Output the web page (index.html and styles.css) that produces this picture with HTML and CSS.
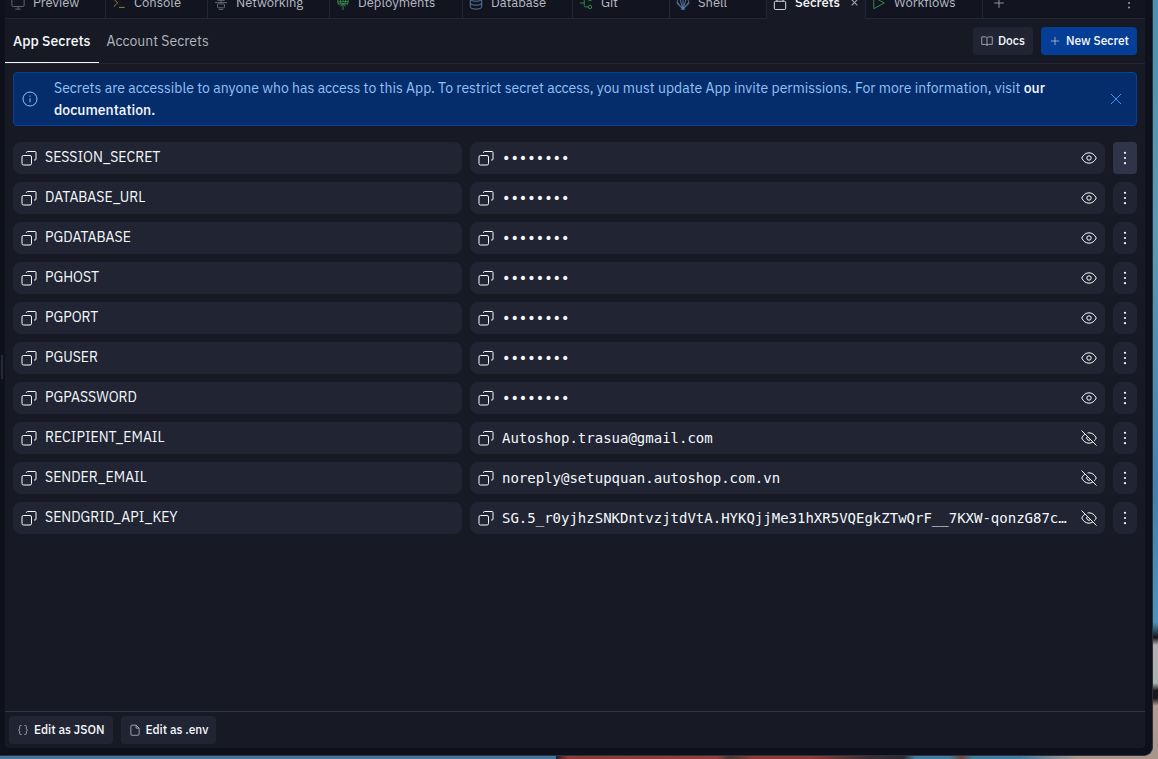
FILE: index.html
```
<!DOCTYPE html>
<html lang="en">
<head>
<meta charset="utf-8">
<title>Secrets</title>
<link rel="stylesheet" href="styles.css">
</head>
<body>
<svg class="sprite" aria-hidden="true">
  <symbol id="copy" viewBox="0 0 16 16"><rect x="1" y="5.500" width="9.500" height="9.500" rx="1.500"/><path d="M5.500 3V2.500a1 1 0 0 1 1-1H14a1 1 0 0 1 1 1V9a1 1 0 0 1-1 1h-1"/></symbol>
  <symbol id="eye" viewBox="0 0 16 16"><path d="M.7 8C2.500 4.500 5 2.800 8 2.800S13.500 4.500 15.300 8C13.500 11.500 11 13.200 8 13.200S2.500 11.500.7 8z"/><circle cx="8" cy="8" r="2.200"/></symbol>
  <symbol id="eye-off" viewBox="0 0 16 16"><path d="M.5.5l15 15M6.500 3A7 7 0 0 1 8 2.800c3 0 5.500 1.700 7.300 5.200a12 12 0 0 1-2 2.800M3.800 4.200A10 10 0 0 0 .7 8c1.800 3.500 4.300 5.200 7.300 5.200a7.500 7.500 0 0 0 3.800-1.200M6.400 6.400a2.200 2.200 0 0 0 3.200 3.200"/></symbol>
  <symbol id="dots" viewBox="0 0 16 16"><g fill="currentColor" stroke="none"><circle cx="8" cy="2.800" r="1.100"/><circle cx="8" cy="8" r="1.100"/><circle cx="8" cy="13.200" r="1.100"/></g></symbol>
  <symbol id="plus" viewBox="0 0 16 16"><path d="M8 2.500v11M2.500 8h11"/></symbol>
  <symbol id="close" viewBox="0 0 16 16"><path d="M3 3l10 10M13 3L3 13"/></symbol>
</svg>
<div class="window">
  <main class="panel">
    <nav class="tabs" aria-label="Tools">
      <button class="tab"><svg class="icon gray" viewBox="0 0 16 16"><rect x="1" y="1" width="14" height="11" rx="1.500"/><path d="M8 12v3M5 15h6"/></svg>Preview</button>
      <button class="tab"><svg class="icon gold" viewBox="0 0 16 16"><path d="M2 3.500l4.500 4.300L2 12.200M8 13h6.500"/></svg>Console</button>
      <button class="tab"><svg class="icon gray" viewBox="0 0 16 16"><rect x="3.500" y="1" width="9" height="4" rx="1"/><path d="M1 7.500h14M8 5v3"/><rect x="4" y="9" width="8" height="4.500" rx="1"/><path d="M5.500 15.500h5"/></svg>Networking</button>
      <button class="tab"><svg class="icon green" viewBox="0 0 16 16"><path d="M3.500 10A6 6 0 1 1 12.500 10M2 6.500h12M8 .5v6M5.500 1.500c-1 3-.5 5 .5 8M10.500 1.500c1 3 .5 5-.5 8M2.500 9h11M8 16V8.500M5 12l3-3.500 3 3.500"/></svg>Deployments</button>
      <button class="tab"><svg class="icon blue" viewBox="0 0 16 16"><ellipse cx="8" cy="3.500" rx="6.500" ry="2.500"/><path d="M1.500 3.500v9c0 1.500 3 2.500 6.500 2.500s6.500-1 6.500-2.500v-9M1.500 8c0 1.500 3 2.500 6.500 2.500s6.500-1 6.500-2.500"/></svg>Database</button>
      <button class="tab"><svg class="icon green" viewBox="0 0 16 16"><path d="M1 8h5M10.500 3.500H7.500a1.500 1.500 0 0 0-1.500 1.500v6a1.500 1.500 0 0 0 1.500 1.500h3"/><circle cx="12.500" cy="3.500" r="2"/><circle cx="12.500" cy="12.500" r="2"/></svg>Git</button>
      <button class="tab"><svg class="icon blue" viewBox="0 0 16 16"><path d="M8 15L1.500 9C.5 5 4 1.500 8 1.500S15.500 5 14.500 9zM8 15L4.500 3.500M8 15V2M8 15l3.500-11.500M8 15L1.500 7M8 15l6.500-8M5.500 15h5"/></svg>Shell</button>
      <button class="tab active" aria-current="page"><svg class="icon" viewBox="0 0 16 16"><rect x="1.500" y="6" width="13" height="9.500" rx="1.500"/><path d="M4.500 6V4a3.500 3.500 0 0 1 7 0v2"/></svg>Secrets<svg class="icon tiny"><use href="#close"/></svg></button>
      <button class="tab"><svg class="icon green" viewBox="0 0 16 16"><path d="M2 1.500v13L14 8z"/></svg>Workflows</button>
      <span class="tabs-end">
        <button class="bare" aria-label="New tab"><svg class="icon"><use href="#plus"/></svg></button>
        <button class="bare" aria-label="Pane menu"><svg class="icon"><use href="#dots"/></svg></button>
      </span>
    </nav>
    <header class="toolbar">
      <a class="view current" href="#app">App Secrets</a>
      <a class="view" href="#account">Account Secrets</a>
      <div class="actions">
        <button class="btn"><svg class="icon small" viewBox="0 0 16 16"><path d="M8 4.200C7.600 3 7 2.500 5.500 2.500H1v10h5c1.200 0 2 .5 2 1.500 0-1 .8-1.500 2-1.500h5v-10h-4.500C9 2.500 8.400 3 8 4.200zV14"/></svg>Docs</button>
        <button class="btn primary"><svg class="icon small"><use href="#plus"/></svg>New Secret</button>
      </div>
    </header>
    <section class="content">
      <div class="banner">
        <svg class="icon info" viewBox="0 0 16 16"><circle cx="8" cy="8" r="7"/><path d="M8 7.300v4M8 4.500v1.200"/></svg>
        <p>Secrets are accessible to anyone who has access to this App. To restrict secret access, you must update App invite permissions. For more information, visit <a href="#docs">our documentation.</a></p>
        <button class="bare dismiss" aria-label="Dismiss"><svg class="icon"><use href="#close"/></svg></button>
      </div>
      <ul class="secrets">
        <li class="row"><div class="field"><button class="bare" aria-label="Copy name"><svg class="icon"><use href="#copy"/></svg></button><span class="name">SESSION_SECRET</span></div><div class="field"><button class="bare" aria-label="Copy value"><svg class="icon"><use href="#copy"/></svg></button><span class="value">••••••••</span><button class="bare" aria-label="Show value"><svg class="icon"><use href="#eye"/></svg></button></div><button class="more hover" aria-label="More"><svg class="icon"><use href="#dots"/></svg></button></li>
        <li class="row"><div class="field"><button class="bare" aria-label="Copy name"><svg class="icon"><use href="#copy"/></svg></button><span class="name">DATABASE_URL</span></div><div class="field"><button class="bare" aria-label="Copy value"><svg class="icon"><use href="#copy"/></svg></button><span class="value">••••••••</span><button class="bare" aria-label="Show value"><svg class="icon"><use href="#eye"/></svg></button></div><button class="more" aria-label="More"><svg class="icon"><use href="#dots"/></svg></button></li>
        <li class="row"><div class="field"><button class="bare" aria-label="Copy name"><svg class="icon"><use href="#copy"/></svg></button><span class="name">PGDATABASE</span></div><div class="field"><button class="bare" aria-label="Copy value"><svg class="icon"><use href="#copy"/></svg></button><span class="value">••••••••</span><button class="bare" aria-label="Show value"><svg class="icon"><use href="#eye"/></svg></button></div><button class="more" aria-label="More"><svg class="icon"><use href="#dots"/></svg></button></li>
        <li class="row"><div class="field"><button class="bare" aria-label="Copy name"><svg class="icon"><use href="#copy"/></svg></button><span class="name">PGHOST</span></div><div class="field"><button class="bare" aria-label="Copy value"><svg class="icon"><use href="#copy"/></svg></button><span class="value">••••••••</span><button class="bare" aria-label="Show value"><svg class="icon"><use href="#eye"/></svg></button></div><button class="more" aria-label="More"><svg class="icon"><use href="#dots"/></svg></button></li>
        <li class="row"><div class="field"><button class="bare" aria-label="Copy name"><svg class="icon"><use href="#copy"/></svg></button><span class="name">PGPORT</span></div><div class="field"><button class="bare" aria-label="Copy value"><svg class="icon"><use href="#copy"/></svg></button><span class="value">••••••••</span><button class="bare" aria-label="Show value"><svg class="icon"><use href="#eye"/></svg></button></div><button class="more" aria-label="More"><svg class="icon"><use href="#dots"/></svg></button></li>
        <li class="row"><div class="field"><button class="bare" aria-label="Copy name"><svg class="icon"><use href="#copy"/></svg></button><span class="name">PGUSER</span></div><div class="field"><button class="bare" aria-label="Copy value"><svg class="icon"><use href="#copy"/></svg></button><span class="value">••••••••</span><button class="bare" aria-label="Show value"><svg class="icon"><use href="#eye"/></svg></button></div><button class="more" aria-label="More"><svg class="icon"><use href="#dots"/></svg></button></li>
        <li class="row"><div class="field"><button class="bare" aria-label="Copy name"><svg class="icon"><use href="#copy"/></svg></button><span class="name">PGPASSWORD</span></div><div class="field"><button class="bare" aria-label="Copy value"><svg class="icon"><use href="#copy"/></svg></button><span class="value">••••••••</span><button class="bare" aria-label="Show value"><svg class="icon"><use href="#eye"/></svg></button></div><button class="more" aria-label="More"><svg class="icon"><use href="#dots"/></svg></button></li>
        <li class="row"><div class="field"><button class="bare" aria-label="Copy name"><svg class="icon"><use href="#copy"/></svg></button><span class="name">RECIPIENT_EMAIL</span></div><div class="field"><button class="bare" aria-label="Copy value"><svg class="icon"><use href="#copy"/></svg></button><span class="value">Autoshop.trasua@gmail.com</span><button class="bare" aria-label="Hide value"><svg class="icon"><use href="#eye-off"/></svg></button></div><button class="more" aria-label="More"><svg class="icon"><use href="#dots"/></svg></button></li>
        <li class="row"><div class="field"><button class="bare" aria-label="Copy name"><svg class="icon"><use href="#copy"/></svg></button><span class="name">SENDER_EMAIL</span></div><div class="field"><button class="bare" aria-label="Copy value"><svg class="icon"><use href="#copy"/></svg></button><span class="value">noreply@setupquan.autoshop.com.vn</span><button class="bare" aria-label="Hide value"><svg class="icon"><use href="#eye-off"/></svg></button></div><button class="more" aria-label="More"><svg class="icon"><use href="#dots"/></svg></button></li>
        <li class="row"><div class="field"><button class="bare" aria-label="Copy name"><svg class="icon"><use href="#copy"/></svg></button><span class="name">SENDGRID_API_KEY</span></div><div class="field"><button class="bare" aria-label="Copy value"><svg class="icon"><use href="#copy"/></svg></button><span class="value">SG.5_r0yjhzSNKDntvzjtdVtA.HYKQjjMe31hXR5VQEgkZTwQrF__7KXW-qonzG87c…</span><button class="bare" aria-label="Hide value"><svg class="icon"><use href="#eye-off"/></svg></button></div><button class="more" aria-label="More"><svg class="icon"><use href="#dots"/></svg></button></li>
      </ul>
    </section>
    <footer class="footer">
      <button class="btn"><svg class="icon small" viewBox="0 0 16 16"><path d="M6 2H5a1.500 1.500 0 0 0-1.500 1.500v3L2 8l1.500 1.500v3A1.500 1.500 0 0 0 5 14h1M10 2h1a1.500 1.500 0 0 1 1.500 1.500v3L14 8l-1.500 1.500v3A1.500 1.500 0 0 1 11 14h-1"/></svg>Edit as JSON</button>
      <button class="btn"><svg class="icon small" viewBox="0 0 16 16"><path d="M9.500 1.500H4A1.500 1.500 0 0 0 2.500 3v10.500A1.500 1.500 0 0 0 4 15h8a1.500 1.500 0 0 0 1.500-1.500v-8zV5.500h4"/></svg>Edit as .env</button>
    </footer>
  </main>
</div>
</body>
</html>
```
FILE: styles.css
```
* { box-sizing: border-box; }
body {
  margin: 0;
  height: 100vh;
  padding: 0 5px 3px 0;
  overflow: hidden;
  font: 500 14px/20px "IBM Plex Sans", Roboto, sans-serif;
  color: #f5f9fc;
  background:
    linear-gradient(#4c8fb0 0%, #5b9ab5 30%, #4380ad 65%, #4b94bd 82%, #14141a 84%, #b5b0b0 85%, #a9b3ac 90%, #1c1719 91%, #1c1719 92%, #b39d92 93%, #a8958b 100%) right / 6px 100% no-repeat,
    linear-gradient(90deg, #40779a 0, #40779a 48%, #211c20 48%, #8a3c35 49%, #913f37 62%, #4a3534 63%, #8c3b33 65%, #8c3b33 70%, #3b3030 75%, #2c2a2e 78%, #3f7c9f 79%, #3f7c9f 82%, #6b453a 83%, #3f7c9f 84%, #3f7c9f 88%, #a9978d 93%, #a9978d 100%);
}
button { font: inherit; color: inherit; border: 0; margin: 0; padding: 0; background: none; cursor: pointer; }
a { color: inherit; text-decoration: none; }
.sprite { position: absolute; width: 0; height: 0; }
.icon { width: 16px; height: 16px; flex: none; fill: none; stroke: currentColor; stroke-width: 1; stroke-linejoin: round; display: block; }
.small { width: 12px; height: 12px; color: #c2c8d0; }
.gray { color: #6b707e; }
.gold { color: #b08c3c; }
.green { color: #38934f; }
.blue { color: #5e84b3; }

.window {
  position: relative;
  height: 100%;
  padding: 0 7px 7px 4px;
  background: #0e101b;
  border: solid #2b2e3b;
  border-width: 0 1px 1px 1px;
  border-left-color: #0e101b;
  border-radius: 0 0 9px 0;
}
/* resize grip between panes */
.window::before { content: ""; position: absolute; left: 0; top: 47%; width: 2px; height: 24px; background: #252938; }
.panel { height: 100%; display: flex; flex-direction: column; background: #171a25; border-radius: 0 0 4px 4px; overflow: hidden; }

.tabs {
  flex: none;
  display: grid;
  grid-template-columns: 101px 102px 122px 133px 110px 97px 97px 99px 117px 1fr;
  grid-template-rows: 19px;
  align-items: end;
  font-size: 13px;
}
.tab, .tabs-end { height: 32px; display: flex; align-items: center; background: #121520; border-bottom: 1px solid #232735; }
.tab { gap: 8px; padding: 0 6px; color: #b7bac3; font-weight: 400; border-right: 1px solid #232735; }
.tabs .icon { width: 14px; height: 14px; }
.tab.active { background: #171a25; border-bottom-color: #171a25; color: #f5f9fc; font-weight: 500; }
.tabs .tiny { width: 9px; height: 9px; margin-left: auto; stroke-width: 2; color: #a0a4b0; }
.tabs-end { justify-content: space-between; padding: 0 9px; color: #a0a4b0; }

.toolbar { flex: none; height: 45px; display: flex; border-bottom: 1px solid #232735; padding-right: 8px; }
.view { padding: 12px 8px; color: #b0b4bd; font-weight: 400; border-bottom: 1px solid transparent; }
.view.current { color: #f5f9fc; font-weight: 500; border-bottom-color: #f5f9fc; }
.actions { margin-left: auto; display: flex; gap: 8px; align-items: center; }
.btn { display: flex; align-items: center; gap: 5px; height: 28px; padding: 0 8px; font-size: 12px; border-radius: 4px; background: #202433; }
.btn.primary { background: #043e97; }

.content { flex: 1; min-height: 0; padding: 8px; }
.banner { display: flex; align-items: center; padding: 4px 12px 4px 8px; border: 1px solid #04409c; border-radius: 4px; background: #062d6b; color: #94c1f5; }
.banner p { flex: 1; margin: 0 40px 0 16px; line-height: 22px; font-weight: 400; }
.banner a { color: #f5f9fc; font-weight: 500; }
.dismiss { color: #4295f5; }
.secrets { list-style: none; margin: 16px 0 0; padding: 0; display: grid; gap: 8px; }
.row { display: grid; grid-template-columns: 449fr 635fr 24px; gap: 8px; }
.field { min-width: 0; height: 32px; display: flex; align-items: center; gap: 8px; padding: 0 8px; border-radius: 8px; background: #202433; }
.name { padding-bottom: 2px; font-weight: 400; }
.value { flex: 1; min-width: 0; overflow: hidden; white-space: nowrap; font-family: "DejaVu Sans Mono", monospace; font-weight: 400; }
.more { display: grid; place-items: center; border-radius: 8px; background: #202433; }
.more.hover { border-radius: 4px; background: #2f3449; }

.footer { flex: none; display: flex; gap: 8px; padding: 4px; border-top: 1px solid #313548; }
```
